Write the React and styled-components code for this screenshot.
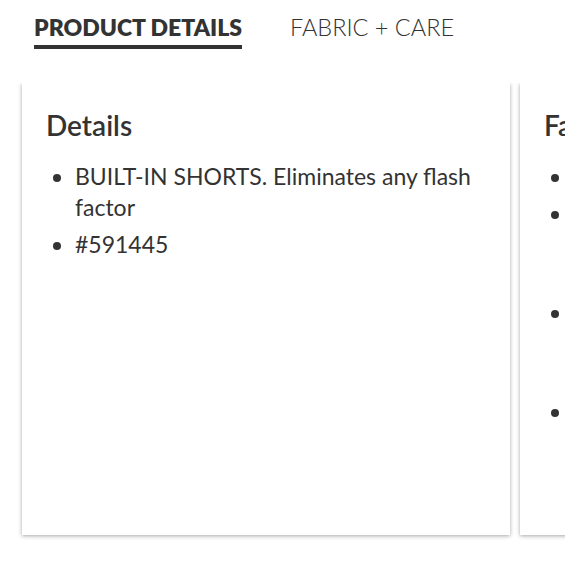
import styled, { createGlobalStyle } from "styled-components";

const GlobalStyle = createGlobalStyle`
  html, body {
    margin: 0;
    padding: 0;
    background: #fff;
  }
  body {
    font-family: Lato, "Noto Sans", sans-serif;
    color: #333;
  }
`;

const details = [
  "BUILT-IN SHORTS. Eliminates any flash factor",
  "#591445",
];

const fabric = [
  "Body: 88% Polyester",
  "Lining: 90% Polyester, 10% Spandex. Quick drying, moisture wicking fabric that keeps you cool",
  "Machine wash cold with like colors. Do not bleach. Tumble dry low, remove promptly",
  "Do not iron. Do not dry clean. Imported",
];

const App = () => {
  return (
    <>
      <GlobalStyle />
      <Page>
        <Tabs>
          <Tab active>PRODUCT DETAILS</Tab>
          <Tab>FABRIC + CARE</Tab>
        </Tabs>
        <Slider>
          <Card>
            <CardTitle>Details</CardTitle>
            <List>
              {details.map((d) => (
                <Item key={d}>{d}</Item>
              ))}
            </List>
          </Card>
          <Card>
            <CardTitle>Fabric + Care</CardTitle>
            <List>
              {fabric.map((d) => (
                <Item key={d}>{d}</Item>
              ))}
            </List>
          </Card>
        </Slider>
      </Page>
    </>
  );
};

const Page = styled.div`
  width: 580px;
  height: 579px;
  overflow: hidden;
`;

const Tabs = styled.div`
  display: flex;
  gap: 48px;
  padding: 13px 0 0 34px;
`;

const Tab = styled.div`
  font-size: ${({ active }) => (active ? "23px" : "23.5px")};
  line-height: 28px;
  font-weight: ${({ active }) => (active ? 800 : 300)};
  color: #333;
  padding-bottom: 4px;
  border-bottom: 4px solid ${({ active }) => (active ? "#333" : "transparent")};
`;

const Slider = styled.div`
  display: flex;
  gap: 10px;
  width: 543px;
  margin-top: 34px;
  padding: 0 0 10px 22px;
  overflow: hidden;
`;

const Card = styled.div`
  flex: 0 0 488px;
  height: 452px;
  box-sizing: border-box;
  padding: 25px 24px;
  background: #fff;
  box-shadow: 0 1px 4px rgba(0, 0, 0, 0.35);
`;

const CardTitle = styled.h3`
  margin: 0 0 19px;
  font-size: 28px;
  line-height: 34px;
  font-weight: 600;
  color: #333;
`;

const List = styled.ul`
  margin: 0;
  padding-left: 29px;
  display: flex;
  flex-direction: column;
  gap: 6px;
`;

const Item = styled.li`
  font-size: 23px;
  line-height: 31px;
  font-weight: 400;
  color: #333;
`;

export default App;
